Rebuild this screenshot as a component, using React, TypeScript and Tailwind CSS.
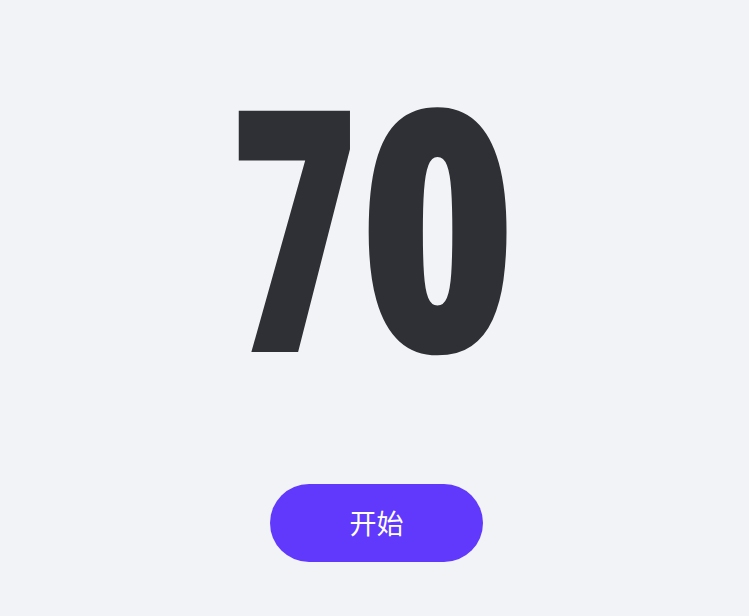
export default function App() {
  return (
    <div className="min-h-screen bg-[#f2f3f7] flex flex-col items-center">
      <div className="h-[460px] w-full flex items-center justify-center pb-[18px]">
        <div
          className="text-[338px] leading-none font-extrabold text-[#2f3035] tracking-[-4px] pr-[21px]"
          style={{ fontFamily: '"Open Sans", sans-serif', fontStretch: '75%' }}
        >
          <span className="inline-block scale-x-[0.78] mr-[-21px]">7</span>
          <span className="inline-block scale-x-[0.96]">0</span>
        </div>
      </div>
      <button
        className="mt-[24px] ml-[4px] w-[213px] h-[78px] rounded-full bg-[#6039fc] text-white text-[27px]"
        style={{ fontFamily: '"Noto Sans CJK SC", sans-serif' }}
      >
        开始
      </button>
    </div>
  );
}
